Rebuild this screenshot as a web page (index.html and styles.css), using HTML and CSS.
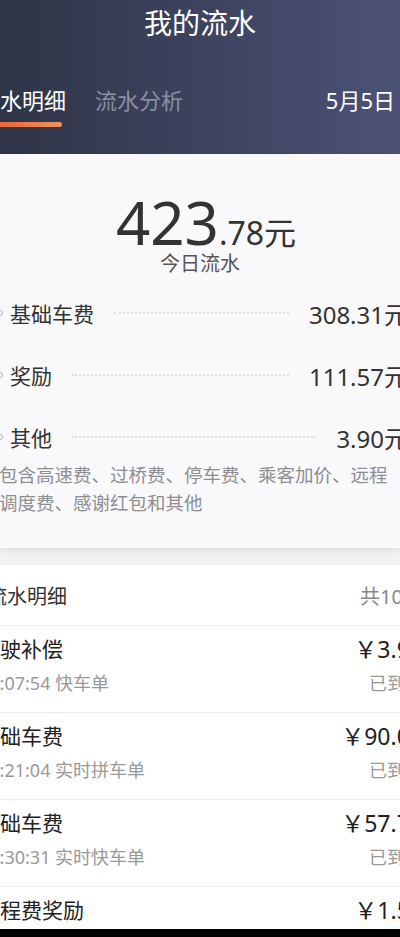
FILE: index.html
```html
<!DOCTYPE html>
<html lang="zh-CN">
<head>
    <meta charset="UTF-8">
    <meta name="viewport" content="width=device-width, initial-scale=1.0">
    <title>我的流水</title>
    <link rel="stylesheet" href="styles.css">
</head>
<body>
    <div class="page">
        <div class="header">
            <h1>我的流水</h1>
            <div class="tabs">
                <div class="tab active">流水明细</div>
                <div class="tab">流水分析</div>
                <div class="date">5月5日</div>
            </div>
        </div>

        <div class="summary">
            <div class="total">423<span class="cents">.78元</span></div>
            <div class="total-label">今日流水</div>
            <div class="item-row">
                <span class="bullet"></span>
                <span class="label">基础车费</span>
                <span class="dots"></span>
                <span class="value">308.31元</span>
            </div>
            <div class="item-row">
                <span class="bullet"></span>
                <span class="label">奖励</span>
                <span class="dots"></span>
                <span class="value">111.57元</span>
            </div>
            <div class="item-row">
                <span class="bullet"></span>
                <span class="label">其他</span>
                <span class="dots"></span>
                <span class="value">3.90元</span>
            </div>
            <p class="note">包含高速费、过桥费、停车费、乘客加价、远程调度费、感谢红包和其他</p>
        </div>

        <div class="list">
            <div class="list-head">
                <span>流水明细</span>
                <span class="count">共10笔</span>
            </div>
            <div class="entry">
                <div class="entry-main">
                    <div class="entry-title">行驶补偿</div>
                    <div class="entry-sub">12:07:54 快车单</div>
                </div>
                <div class="entry-side">
                    <div class="amount">￥3.90</div>
                    <div class="status">已到账</div>
                </div>
            </div>
            <div class="entry">
                <div class="entry-main">
                    <div class="entry-title">基础车费</div>
                    <div class="entry-sub">10:21:04 实时拼车单</div>
                </div>
                <div class="entry-side">
                    <div class="amount">￥90.00</div>
                    <div class="status">已到账</div>
                </div>
            </div>
            <div class="entry">
                <div class="entry-main">
                    <div class="entry-title">基础车费</div>
                    <div class="entry-sub">09:30:31 实时快车单</div>
                </div>
                <div class="entry-side">
                    <div class="amount">￥57.71</div>
                    <div class="status">已到账</div>
                </div>
            </div>
            <div class="entry">
                <div class="entry-main">
                    <div class="entry-title">远程费奖励</div>
                    <div class="entry-sub">08:42:17 快车单</div>
                </div>
                <div class="entry-side">
                    <div class="amount">￥1.50</div>
                    <div class="status">已到账</div>
                </div>
            </div>
        </div>

        <div class="nav-bar"></div>
    </div>
</body>
</html>
```

FILE: styles.css
```css
/* Global styles */
body {
    margin: 0;
    background-color: #f2f2f4;
    font-family: "Noto Sans", "Noto Sans CJK SC", sans-serif;
    color: #333;
}
.page {
    width: 400px;
    height: 937px;
    overflow: hidden;
    display: flex;
    flex-direction: column;
}
/* Header */
.header {
    flex-shrink: 0;
    background: linear-gradient(90deg, #2f3447, #4b5275);
    padding-bottom: 27px;
    color: #fff;
}
h1 {
    margin: 0;
    font-size: 28px;
    font-weight: normal;
    line-height: 46px;
    text-align: center;
}
.tabs {
    display: flex;
    align-items: flex-start;
    margin-top: 39px;
    margin-left: -22px;
    padding-right: 5px;
    font-size: 22px;
    line-height: 30px;
}
.tab {
    color: #8a8fa3;
}
.tab + .tab {
    margin-left: 29px;
}
.tab.active {
    color: #fff;
}
.tab.active::after {
    content: "";
    display: block;
    width: 80px;
    height: 5px;
    margin: 7px auto 0;
    border-radius: 3px;
    background: linear-gradient(90deg, #e85a26, #f0925a);
}
.date {
    margin-left: auto;
}
/* Summary card */
.summary {
    flex-shrink: 0;
    background-color: #f9f9fb;
    padding: 37px 0 31px;
    margin-bottom: 17px;
    box-shadow: 0 3px 6px rgba(0, 0, 0, 0.08);
}
.total {
    font-size: 60px;
    line-height: 62px;
    text-align: center;
    padding-left: 12px;
    color: #333;
}
.cents {
    font-size: 32px;
    line-height: 1;
}
.total-label {
    font-size: 20px;
    line-height: 22px;
    text-align: center;
    color: #555;
}
.item-row {
    display: flex;
    align-items: center;
    height: 30px;
    margin: 32px -8px 0 -3px;
}
.total-label + .item-row {
    margin-top: 23px;
}
.bullet {
    width: 6px;
    height: 6px;
    box-sizing: border-box;
    border: 1.5px solid #b3b3b8;
    border-radius: 50%;
    margin-right: 7px;
}
.label {
    font-size: 21px;
    color: #333;
}
.dots {
    flex: 1;
    margin: 0 20px;
    border-top: 2px dotted #dedee3;
}
.value {
    font-size: 24px;
    color: #333;
}
.note {
    margin: 9px -4px 0 -1px;
    font-size: 18.5px;
    line-height: 28px;
    color: #8e8e93;
}
/* Entries list */
.list {
    flex: 1;
    overflow: hidden;
    background-color: #fff;
}
.list-head {
    display: flex;
    justify-content: space-between;
    align-items: center;
    height: 60px;
    margin: 0 -23px 0 -13px;
    border-bottom: 1px solid #eeeeef;
    font-size: 20px;
    color: #333;
}
.count {
    color: #888;
}
.entry {
    display: flex;
    justify-content: space-between;
    margin: 0 -23px 0 -21px;
    padding: 9px 0 15px;
    border-bottom: 1px solid #eeeeef;
}
.entry-title {
    font-size: 21px;
    line-height: 28px;
    color: #222;
}
.entry-sub, .status {
    margin-top: 6px;
    font-size: 18px;
    line-height: 28px;
    color: #999;
}
.entry-side {
    text-align: right;
}
.amount {
    font-size: 23px;
    line-height: 28px;
    color: #222;
}
.nav-bar {
    flex-shrink: 0;
    height: 8px;
    background-color: #000;
}
```
